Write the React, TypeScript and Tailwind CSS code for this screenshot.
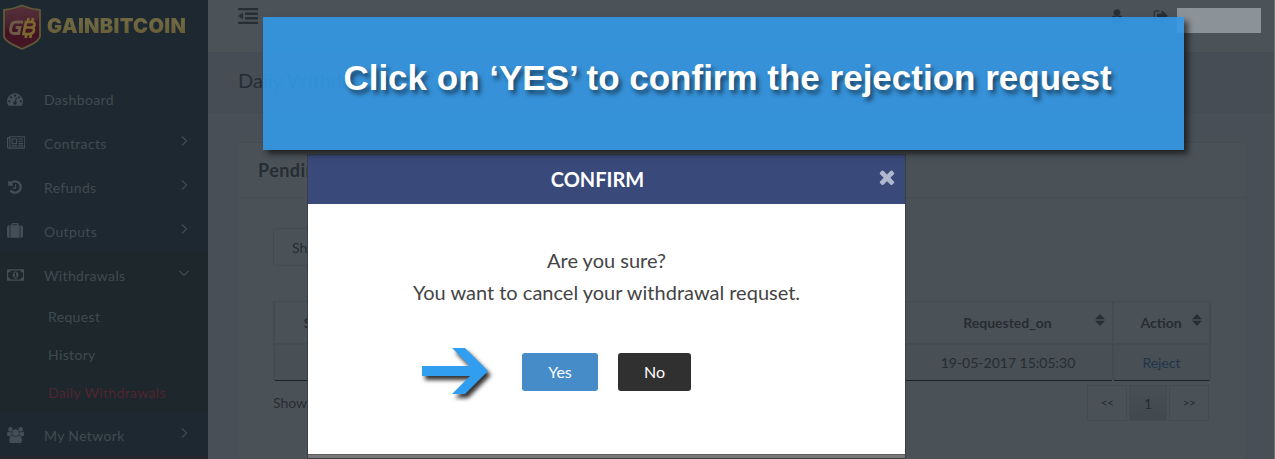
import React from "react";

const paths = {
  dashboard:
    "M384 1152q0-53-37.5-90.5t-90.5-37.5-90.5 37.5-37.5 90.5 37.5 90.5 90.5 37.5 90.5-37.5 37.5-90.5zm192-448q0-53-37.5-90.5t-90.5-37.5-90.5 37.5-37.5 90.5 37.5 90.5 90.5 37.5 90.5-37.5 37.5-90.5zm428 481l101-382q6-26-7.5-48.5t-38.5-29.5-48 6.5-30 39.5l-101 382q-60 5-107 43.5t-63 98.5q-20 77 20 146t117 89 146-20 89-117q16-60-6-117t-72-91zm660-33q0-53-37.5-90.5t-90.5-37.5-90.5 37.5-37.5 90.5 37.5 90.5 90.5 37.5 90.5-37.5 37.5-90.5zm-640-640q0-53-37.5-90.5t-90.5-37.5-90.5 37.5-37.5 90.5 37.5 90.5 90.5 37.5 90.5-37.5 37.5-90.5zm448 192q0-53-37.5-90.5t-90.5-37.5-90.5 37.5-37.5 90.5 37.5 90.5 90.5 37.5 90.5-37.5 37.5-90.5zm320 448q0 261-141 483-19 29-54 29h-1402q-35 0-54-29-141-221-141-483 0-182 71-348t191-286 286-191 348-71 348 71 286 191 191 286 71 348z",
  newspaper:
    "M1024 512h-384v384h384v-384zm128 640v128h-640v-128h640zm0-768v640h-640v-640h640zm640 768v128h-512v-128h512zm0-256v128h-512v-128h512zm0-256v128h-512v-128h512zm0-256v128h-512v-128h512zm-1536 960v-960h-128v960q0 26 19 45t45 19 45-19 19-45zm1664 0v-1088h-1536v1088q0 33-11 64h1483q26 0 45-19t19-45zm128-1216v1216q0 80-56 136t-136 56h-1664q-80 0-136-56t-56-136v-1088h256v-128h1792z",
  history:
    "M1664 896q0 156-61 298t-164 245-245 164-298 61q-172 0-327-72.5t-264-204.5q-7-10-6.5-22.5t8.5-20.5l137-138q10-9 25-9 16 2 23 12 73 95 179 147t225 52q104 0 198.5-40.5t163.5-109.5 109.5-163.5 40.5-198.5-40.5-198.5-109.5-163.5-163.5-109.5-198.5-40.5q-98 0-188 35.5t-160 101.5l137 138q31 30 14 69-17 40-59 40h-448q-26 0-45-19t-19-45v-448q0-42 40-59 39-17 69 14l130 129q107-101 244.5-156.5t284.5-55.5q156 0 298 61t245 164 164 245 61 298zm-640-288v448q0 14-9 23t-23 9h-320q-14 0-23-9t-9-23v-64q0-14 9-23t23-9h224v-352q0-14 9-23t23-9h64q14 0 23 9t9 23z",
  suitcase:
    "M640 256h512v-128h-512v128zm-352 0v1408h-64q-92 0-158-66t-66-158v-960q0-92 66-158t158-66h64zm1120 0v1408h-1024v-1408h128v-160q0-40 28-68t68-28h576q40 0 68 28t28 68v160h128zm384 224v960q0 92-66 158t-158 66h-64v-1408h64q92 0 158 66t66 158z",
  money:
    "M768 1152h384v-96h-128v-448h-114l-148 137 77 80q42-37 55-57h2v288h-128v96zm512-256q0 70-21 142t-59.5 134-101.5 101-138 39-138-39-101.5-101-59.5-134-21-142 21-142 59.5-134 101.5-101 138-39 138 39 101.5 101 59.5 134 21 142zm512 256v-512q-106 0-181-75t-75-181h-1152q0 106-75 181t-181 75v512q106 0 181 75t75 181h1152q0-106 75-181t181-75zm128-832v1152q0 26-19 45t-45 19h-1792q-26 0-45-19t-19-45v-1152q0-26 19-45t45-19h1792q26 0 45 19t19 45z",
  users:
    "M593 896q-162 5-265 128h-134q-82 0-138-40.5t-56-118.5q0-353 124-353 6 0 43.5 21t97.5 42.5 119 21.5q67 0 133-23-5 37-5 66 0 139 81 256zm1071 637q0 120-73 189.5t-194 69.5h-874q-121 0-194-69.5t-73-189.5q0-53 3.5-103.5t14-109 26.5-108.5 43-97.5 62-81 85.5-53.5 111.5-20q10 0 43 21.5t73 48 107 48 135 21.5 135-21.5 107-48 73-48 43-21.5q61 0 111.5 20t85.5 53.5 62 81 43 97.5 26.5 108.5 14 109 3.5 103.5zm-1024-1277q0 106-75 181t-181 75-181-75-75-181 75-181 181-75 181 75 75 181zm704 384q0 159-112.5 271.5t-271.5 112.5-271.5-112.5-112.5-271.5 112.5-271.5 271.5-112.5 271.5 112.5 112.5 271.5zm576 225q0 78-56 118.5t-138 40.5h-134q-103-123-265-128 81-117 81-256 0-29-5-66 66 23 133 23 59 0 119-21.5t97.5-42.5 43.5-21q124 0 124 353zm-128-609q0 106-75 181t-181 75-181-75-75-181 75-181 181-75 181 75 75 181z",
  user: "M1536 1399q0 109-62.5 187t-150.5 78h-854q-88 0-150.5-78t-62.5-187q0-85 8.5-160.5t31.5-152 58.5-131 94-89 134.5-34.5q131 128 313 128t313-128q76 0 134.5 34.5t94 89 58.5 131 31.5 152 8.5 160.5zm-256-887q0 159-112.5 271.5t-271.5 112.5-271.5-112.5-112.5-271.5 112.5-271.5 271.5-112.5 271.5 112.5 112.5 271.5z",
  signOut:
    "M704 1440q0 4 1 20t.5 26.5-3 23.5-10 19.5-20.5 6.5h-320q-119 0-203.5-84.5t-84.5-203.5v-704q0-119 84.5-203.5t203.5-84.5h320q13 0 22.5 9.5t9.5 22.5q0 4 1 20t.5 26.5-3 23.5-10 19.5-20.5 6.5h-320q-66 0-113 47t-47 113v704q0 66 47 113t113 47h312l11.5 1 11.5 3 8 5.5 7 9 2 13.5zm928-544q0 26-19 45l-544 544q-19 19-45 19t-45-19-19-45v-288h-448q-26 0-45-19t-19-45v-384q0-26 19-45t45-19h448v-288q0-26 19-45t45-19 45 19l544 544q19 19 19 45z",
  times:
    "M1490 1322q0 40-28 68l-136 136q-28 28-68 28t-68-28l-294-294-294 294q-28 28-68 28t-68-28l-136-136q-28-28-28-68t28-68l294-294-294-294q-28-28-28-68t28-68l136-136q28-28 68-28t68 28l294 294 294-294q28-28 68-28t68 28l136 136q28 28 28 68t-28 68l-294 294 294 294q28 28 28 68z",
};

type IconName = keyof typeof paths;

function Icon({ name, box = 1792, className }: { name: IconName; box?: number; className: string }) {
  return (
    <svg viewBox={`0 0 ${box} 1792`} fill="currentColor" aria-hidden="true" className={className}>
      <path d={paths[name]} />
    </svg>
  );
}

function Chevron({ open = false }: { open?: boolean }) {
  return (
    <svg viewBox="0 0 10 10" fill="none" stroke="currentColor" strokeWidth="1.2" aria-hidden="true" className="mb-1 size-[10px]">
      <path d={open ? "M.5 3L5 7.500 9.500 3" : "M3 .5L7.500 5 3 9.500"} />
    </svg>
  );
}

function Logo() {
  return (
    <a href="#" className="flex h-[77px] items-start gap-[5px] pl-[2px] pt-[4px]">
      <svg viewBox="0 0 40 47" className="h-[47px] w-[40px]" aria-hidden="true">
        <defs>
          <linearGradient id="shield" x1="0" y1="0" x2="0" y2="1">
            <stop offset="0" stopColor="#573039" />
            <stop offset="0.35" stopColor="#4c2632" />
            <stop offset="0.6" stopColor="#431523" />
            <stop offset="1" stopColor="#4a1b28" />
          </linearGradient>
        </defs>
        <path d="M20 1.500C14 4 8 5.500 2 6v26c0 5 11 10 18 13 7-3 18-8 18-13V6C32 5.500 26 4 20 1.500z" fill="url(#shield)" stroke="#5f5a38" strokeWidth="1.800" />
        <path d="M3 24c10 3 23 0 34-9v16c0 5-10 9-17 12C13 40 3 36 3 31z" fill="#421323" opacity="0.6" />
        <path d="M21 18h-7c-3 0-4.500 2-5 5l-.4 2c-.5 3 1 4.500 3.500 4.500h4.500l1.200-6h-4" fill="none" stroke="#6e5a48" strokeWidth="3" />
        <path d="M21.500 30l2.500-12h5c3 0 4 1.300 3.500 3S31 23.500 28.500 23.500H24h4.500c3 0 4 1.300 3.400 3.300C31.400 29 29.500 30 27 30zM26.500 14l-.8 4M31 14l-.8 4M24.500 30l-.8 4M29 30l-.8 4" fill="none" stroke="#7b6730" strokeWidth="2.700" />
      </svg>
      <span className="bg-linear-to-b from-[#6b5d2e] via-[#6f6843] to-[#665a30] bg-clip-text pt-[8px] font-[Inter] text-[20px] font-black leading-[28px] text-transparent">
        GAINBITCOIN
      </span>
    </a>
  );
}

function NavItem({ icon, box, label, chevron }: { icon: IconName; box?: number; label: string; chevron?: "closed" | "open" }) {
  return (
    <a href="#" className="flex h-11 items-center pl-[7px] pr-[19px]">
      <span className="flex w-[37px] text-[#434f57]">
        <Icon name={icon} box={box} className="h-4 w-auto" />
      </span>
      <span className="flex-1">{label}</span>
      {chevron && <Chevron open={chevron === "open"} />}
    </a>
  );
}

function Sidebar() {
  return (
    <nav className="w-52 shrink-0 bg-[#1e2830] text-[14px] tracking-wide text-[#404b52]">
      <Logo />
      <NavItem icon="dashboard" label="Dashboard" />
      <NavItem icon="newspaper" box={2048} label="Contracts" chevron="closed" />
      <NavItem icon="history" label="Refunds" chevron="closed" />
      <NavItem icon="suitcase" label="Outputs" chevron="closed" />
      <div className="bg-[#1d272c]">
        <NavItem icon="money" box={1920} label="Withdrawals" chevron="open" />
        <ul className="pl-12">
          <li><a href="#" className="flex h-[38px] items-center">Request</a></li>
          <li><a href="#" className="flex h-[38px] items-center">History</a></li>
          <li><a href="#" className="flex h-[38px] items-center text-[#512530]">Daily Withdrawals</a></li>
        </ul>
      </div>
      <div className="border-b border-[#2b1f29] pt-[2px]">
        <NavItem icon="users" box={1920} label="My Network" chevron="closed" />
      </div>
    </nav>
  );
}

function SortIcon() {
  return (
    <svg viewBox="0 0 10 12" fill="#272e34" className="h-3 w-[10px]" aria-hidden="true">
      <path d="M0 5.200L5 0l5 5.200zM0 6.800h10L5 12z" />
    </svg>
  );
}

function Heading({ label }: { label: string }) {
  return (
    <th className="border-2 border-t border-[#444b52] p-0 font-bold">
      <div className="flex items-center pl-4 pr-[7px]">
        <span className="flex-1">{label}</span>
        <span className="pb-[5px]"><SortIcon /></span>
      </div>
    </th>
  );
}

function Main() {
  return (
    <div className="flex min-w-0 flex-1 flex-col border-r border-[#6b7278] bg-[#484f56] text-[#262d33]">
      <header className="flex h-[52px] items-start justify-between bg-[#4b5258] pl-[30px] pr-[13px] pt-2">
        <button type="button" aria-label="Collapse menu">
          <svg viewBox="0 0 20 16" fill="#272e34" className="h-4 w-5" aria-hidden="true">
            <path d="M0 0h20v2.300H0zM7 4.600h13v2.300H7zM7 9.100h13v2.300H7zM0 13.700h20V16H0zM5 4.600v6.800L0 8z" />
          </svg>
        </button>
        <div className="flex items-start text-[#272e34]">
          <a href="#" aria-label="Profile" className="mr-7"><Icon name="user" className="size-4" /></a>
          <a href="#" aria-label="Sign out" className="mr-2"><Icon name="signOut" className="size-4" /></a>
          <span className="h-[25px] w-[84px] bg-[#8b9298]" />
        </div>
      </header>
      <div className="flex h-[61px] items-center border-y border-[#454c53] bg-[#464d54] pl-[30px]">
        <h1 className="pb-[6px] text-[20px]">Daily Withdrawals</h1>
      </div>
      <section className="ml-[30px] mr-[29px] mt-[29px] flex-1 border-t border-[#454c52] bg-[#4b5257]">
        <h2 className="flex h-[55px] items-center border-b border-[#454c52] pl-5 text-[18px] font-bold tracking-wide">
          Pending Withdrawals
        </h2>
        <div className="pl-[35px] pr-[34px] pt-[30px] text-[14px]">
          <button type="button" className="flex h-[38px] items-center rounded-sm border border-[#434a51] px-[18px]">Show</button>
          <table className="mt-[35px] w-full table-fixed border-collapse border-b border-[#1a2127] text-center">
            <colgroup>
              <col className="w-[90px]" />
              <col />
              <col className="w-[210px]" />
              <col className="w-[97px]" />
            </colgroup>
            <thead>
              <tr className="h-[42px]">
                <Heading label="S.No" />
                <Heading label="Amount" />
                <Heading label="Requested_on" />
                <Heading label="Action" />
              </tr>
            </thead>
            <tbody>
              <tr className="h-[37px] bg-[#484f55]">
                <td className="border-x-2 border-[#444b52]">1</td>
                <td className="border-x-2 border-[#444b52]">0</td>
                <td className="border-x-2 border-[#444b52]">19-05-2017 15:05:30</td>
                <td className="border-x-2 border-[#444b52]"><a href="#" className="text-[#1f3548]">Reject</a></td>
              </tr>
            </tbody>
          </table>
          <div className="flex items-start justify-between pt-1">
            <p className="pt-[7px]">Showing 1 to 1 of 1 entries</p>
            <div className="flex gap-[2px] pr-[2px]">
              <button type="button" className="h-9 w-10 border border-[#444b52] text-[12px] tracking-tighter">&lt;&lt;</button>
              <button type="button" className="h-9 w-[38px] border border-[#444b52] bg-linear-to-b from-[#484f55] to-[#41484f]">1</button>
              <button type="button" className="h-9 w-10 border border-[#444b52] text-[12px] tracking-tighter">&gt;&gt;</button>
            </div>
          </div>
        </div>
      </section>
    </div>
  );
}

function ConfirmDialog() {
  return (
    <div role="dialog" aria-labelledby="confirm-title" className="absolute left-[307px] top-[154px] w-[599px] border border-[#393f45] bg-white text-[#444]">
      <div className="relative flex h-[49px] items-center justify-center bg-[#394979] pb-px pr-[18px] text-white">
        <h2 id="confirm-title" className="text-[20px] font-bold">CONFIRM</h2>
        <button type="button" aria-label="Close" className="absolute right-[7px] top-[11px] text-[#b0b7cf]">
          <Icon name="times" className="size-[22px]" />
        </button>
      </div>
      <div className="flex h-[250px] flex-col items-center pt-10 text-[20px] leading-8">
        <p>Are you sure?</p>
        <p>You want to cancel your withdrawal requset.</p>
        <div className="mt-[45px] flex gap-5 text-[16px]">
          <button type="button" className="h-[38px] w-[76px] rounded-[3px] bg-[#458cc9] text-white">Yes</button>
          <button type="button" className="h-[38px] w-[73px] rounded-[3px] bg-[#303030] text-white">No</button>
        </div>
      </div>
      <div className="h-1 border-t border-[#5f5f5f] bg-[#777]" />
      <svg viewBox="0 0 66 46" className="absolute left-[114px] top-[193px] h-[46px] w-[66px] overflow-visible drop-shadow-[3px_4px_2px_rgba(0,0,0,0.8)]" aria-hidden="true">
        <path d="M0 18h48L30 0h13l23 23-23 23H30l18-18H0z" fill="#329eef" />
      </svg>
    </div>
  );
}

export default function App() {
  return (
    <div className="relative flex min-h-screen overflow-hidden font-[Lato,sans-serif]">
      <Sidebar />
      <Main />
      <ConfirmDialog />
      <div className="absolute left-[263px] right-[91px] top-[17px] flex h-[133px] items-center justify-center bg-[#3499e7]/90 pb-[10px] shadow-[4px_4px_6px_rgba(0,0,0,0.6)]">
        <p className="pl-2 font-[Liberation_Sans,sans-serif] text-[35px] font-bold text-white [text-shadow:3px_4px_4px_rgba(0,0,0,0.5)]">
          Click on ‘YES’ to confirm the rejection request
        </p>
      </div>
    </div>
  );
}
